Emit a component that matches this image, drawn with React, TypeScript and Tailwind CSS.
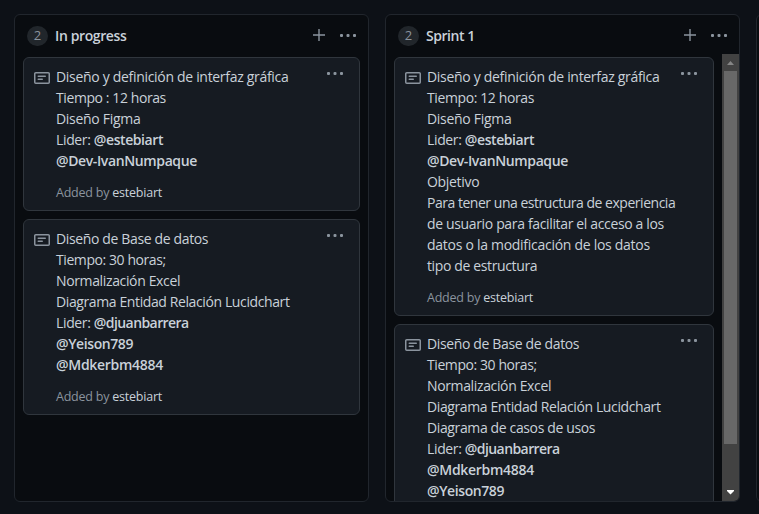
import React from "react";

type Line = { text?: string; mention?: string; fit: string; mentionFit?: string };

function Dots({ className }: { className: string }) {
  return (
    <svg viewBox="0 0 17 16" width="17" height="16" className={className} fill="currentColor">
      <rect x="0" y="7" width="3" height="3" rx="1" />
      <rect x="6.5" y="7" width="3" height="3" rx="1" />
      <rect x="13" y="7" width="3" height="3" rx="1" />
    </svg>
  );
}

function NoteIcon() {
  return (
    <svg viewBox="0 0 16 16" width="16" height="16" fill="currentColor" className="mt-1 shrink-0 text-[#8b949e]">
      <path
        fillRule="evenodd"
        d="M0 3.75C0 2.784.784 2 1.75 2h12.5c.966 0 1.75.784 1.75 1.75v8.5A1.75 1.75 0 0114.25 14H1.75A1.75 1.75 0 010 12.25v-8.5zm1.75-.25a.25.25 0 00-.25.25v8.5c0 .138.112.25.25.25h12.5a.25.25 0 00.25-.25v-8.5a.25.25 0 00-.25-.25H1.75zM3.5 6.25a.75.75 0 01.75-.75h7a.75.75 0 010 1.5h-7a.75.75 0 01-.75-.75zm.75 2.25a.75.75 0 000 1.5h4a.75.75 0 000-1.5h-4z"
      />
    </svg>
  );
}

function Card({ lines }: { lines: Line[] }) {
  return (
    <article className="flex shrink-0 rounded-md border border-[#30363d] bg-[#161b22] pt-2 pb-2 pl-[10px] pr-[15px]">
      <NoteIcon />
      <div className="ml-1.5 min-w-0 flex-1">
        {lines.map((line, i) => (
          <p key={i} className="h-[21px] whitespace-nowrap text-[14px] leading-[21px] text-[#c9d1d9]">
            {line.text && <span className={line.fit}>{line.text}</span>}
            {line.mention && <span className={`font-semibold ${line.mentionFit ?? line.fit}`}>{line.mention}</span>}
          </p>
        ))}
        <p className="mt-[13px] h-[18px] whitespace-nowrap text-[12.5px] leading-[18px] tracking-[-0.22px] text-[#8b949e]">
          Added by <span className="text-[#c9d1d9]">estebiart</span>
        </p>
      </div>
      <Dots className="-ml-8 -mt-px shrink-0 text-[#8b949e]" />
    </article>
  );
}

function Column({ title, titleFit, cards, scroll }: { title: string; titleFit: string; cards: Line[][]; scroll?: boolean }) {
  return (
    <section className="flex h-[488px] w-[355px] shrink-0 flex-col overflow-hidden rounded-md border border-[#21262d] bg-[#090c10]">
      <header className="flex h-[39px] shrink-0 items-center pl-3 pr-[11px] pt-[3px]">
        <span className="flex h-5 w-[21px] items-center justify-center rounded-full bg-[#21262b] text-[13px] text-[#8b949e]">2</span>
        <h3 className={`-mt-0.5 ml-[7px] flex-1 text-[14px] font-semibold leading-[21px] text-[#c9d1d9] ${titleFit}`}>{title}</h3>
        <svg width="12" height="12" viewBox="0 0 12 12" className="mr-[15px] -mt-[3px] text-[#8b949e]" fill="currentColor">
          <path d="M5.3 0h1.4v5.3H12v1.4H6.7V12H5.3V6.7H0V5.3h5.3z" />
        </svg>
        <Dots className="-mt-[2px] text-[#8b949e]" />
      </header>
      <div className="flex min-h-0 flex-1">
        <div className="flex min-w-0 flex-1 flex-col gap-2 overflow-hidden px-2 pt-[3px]">
          {cards.map((lines, i) => (
            <Card key={i} lines={lines} />
          ))}
        </div>
        {scroll && (
          <div className="flex w-[17px] shrink-0 flex-col items-center bg-[#424242]">
            <svg width="17" height="17" viewBox="0 0 17 17" fill="#868686" className="shrink-0">
              <path d="M8.5 7 12 11H5z" />
            </svg>
            <div className="h-[373px] w-[13px] bg-[#686868]" />
            <div className="flex-1" />
            <svg width="17" height="17" viewBox="0 0 17 17" fill="#ffffff" className="shrink-0">
              <path d="M5 6h7v1l-3.5 3.5L5 7z" />
            </svg>
          </div>
        )}
      </div>
    </section>
  );
}

const LEADER = "tracking-[-0.35px]";

const inProgress: Line[][] = [
  [
    { text: "Diseño y definición de interfaz gráfica", fit: "tracking-[-0.31px]" },
    { text: "Tiempo : 12 horas", fit: "tracking-[-0.41px]" },
    { text: "Diseño Figma", fit: "tracking-[-0.3px]" },
    { text: "Lider: ", mention: "@estebiart", fit: LEADER, mentionFit: "tracking-[-0.42px]" },
    { mention: "@Dev-IvanNumpaque", fit: "tracking-[-0.38px]" },
  ],
  [
    { text: "Diseño de Base de datos", fit: "tracking-[-0.36px]" },
    { text: "Tiempo: 30 horas;", fit: "tracking-[-0.42px]" },
    { text: "Normalización Excel", fit: "tracking-[-0.36px]" },
    { text: "Diagrama Entidad Relación Lucidchart", fit: "tracking-[-0.39px]" },
    { text: "Lider: ", mention: "@djuanbarrera", fit: LEADER, mentionFit: "tracking-[-0.58px]" },
    { mention: "@Yeison789", fit: "tracking-[-0.4px]" },
    { mention: "@Mdkerbm4884", fit: "tracking-[-0.29px]" },
  ],
];

const sprint: Line[][] = [
  [
    { text: "Diseño y definición de interfaz gráfica", fit: "tracking-[-0.31px]" },
    { text: "Tiempo: 12 horas", fit: "tracking-[-0.39px]" },
    { text: "Diseño Figma", fit: "tracking-[-0.3px]" },
    { text: "Lider: ", mention: "@estebiart", fit: LEADER, mentionFit: "tracking-[-0.42px]" },
    { mention: "@Dev-IvanNumpaque", fit: "tracking-[-0.38px]" },
    { text: "Objetivo", fit: "tracking-[-0.32px]" },
    { text: "Para tener una estructura de experiencia", fit: "tracking-[-0.475px]" },
    { text: "de usuario para facilitar el acceso a los", fit: "tracking-[-0.35px]" },
    { text: "datos o la modificación de los datos", fit: "tracking-[-0.28px]" },
    { text: "tipo de estructura", fit: "tracking-[-0.37px]" },
  ],
  [
    { text: "Diseño de Base de datos", fit: "tracking-[-0.36px]" },
    { text: "Tiempo: 30 horas;", fit: "tracking-[-0.42px]" },
    { text: "Normalización Excel", fit: "tracking-[-0.36px]" },
    { text: "Diagrama Entidad Relación Lucidchart", fit: "tracking-[-0.39px]" },
    { text: "Diagrama de casos de usos", fit: "tracking-[-0.37px]" },
    { text: "Lider: ", mention: "@djuanbarrera", fit: LEADER, mentionFit: "tracking-[-0.58px]" },
    { mention: "@Mdkerbm4884", fit: "tracking-[-0.29px]" },
    { mention: "@Yeison789", fit: "tracking-[-0.4px]" },
  ],
];

export default function App() {
  return (
    <main className="flex h-[514px] w-[759px] gap-4 overflow-hidden bg-[#0d1117] pl-[14px] pt-[14px] font-['Open_Sans','Noto_Sans',sans-serif]">
      <Column title="In progress" titleFit="tracking-[-0.38px]" cards={inProgress} />
      <Column title="Sprint 1" titleFit="tracking-[-0.45px]" cards={sprint} scroll />
      <section className="h-[488px] w-[355px] shrink-0 rounded-md border border-[#21262d] bg-[#090c10]" />
    </main>
  );
}
